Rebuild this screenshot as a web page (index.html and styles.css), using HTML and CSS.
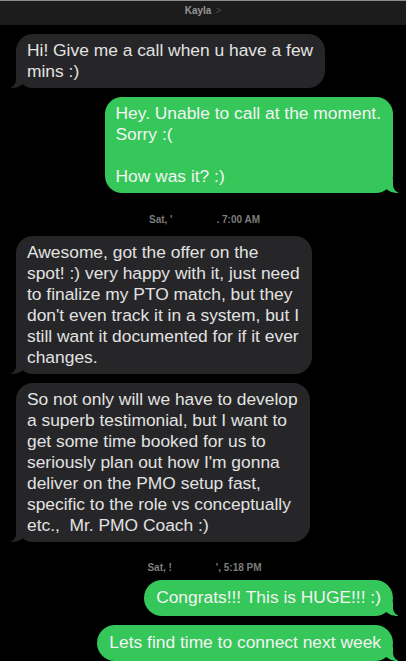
FILE: index.html
```html
<!DOCTYPE html>
<html>
<head>
<meta charset="utf-8">
<link rel="stylesheet" href="styles.css">
</head>
<body>
<header class="topbar">
  <span class="name">Kayla</span><span class="chev">&gt;</span>
</header>
<main class="thread">
  <div class="msg in">Hi! Give me a call when u have a few<br>mins :)</div>
  <div class="msg out">Hey. Unable to call at the moment.<br>Sorry :(<br><br>How was it? :)</div>
  <div class="stamp">Sat, '<span class="gap"></span>. 7:00 AM</div>
  <div class="msg in">Awesome, got the offer on the<br>spot! :) very happy with it, just need<br>to finalize my PTO match, but they<br>don't even track it in a system, but I<br>still want it documented for if it ever<br>changes.</div>
  <div class="msg in">So not only will we have to develop<br>a superb testimonial, but I want to<br>get some time booked for us to<br>seriously plan out how I'm gonna<br>deliver on the PMO setup fast,<br>specific to the role vs conceptually<br>etc.,&nbsp; Mr. PMO Coach :)</div>
  <div class="stamp tight">Sat, !<span class="gap"></span>', 5:18 PM</div>
  <div class="msg out single">Congrats!!! This is HUGE!!! :)</div>
  <div class="msg out single">Lets find time to connect next week</div>
</main>
</body>
</html>
```

FILE: styles.css
```css
html, body {
  margin: 0;
  padding: 0;
  background: #000;
}
body {
  width: 406px;
  height: 661px;
  overflow: hidden;
  font-family: "Liberation Sans", Arial, sans-serif;
}
.topbar {
  height: 25px;
  background: #1c1c1d;
  border-top: 1px solid #8c8c8c;
  box-sizing: border-box;
  display: flex;
  justify-content: center;
  align-items: flex-start;
  padding-top: 4px;
  font-size: 10px;
  font-weight: bold;
  color: #959595;
}
.chev {
  margin-left: 4px;
  font-weight: normal;
  color: #4a4a4a;
}
.thread {
  display: flex;
  flex-direction: column;
  padding: 9px 13px 0 16px;
}
.msg {
  position: relative;
  font-size: 17.4px;
  line-height: 21px;
  padding: 6px 12px 6px 11px;
  border-radius: 17px;
  white-space: nowrap;
  margin-bottom: 9px;
}
.msg.single {
  padding: 7px 12px 8px 12px;
  border-radius: 18px;
}
.msg.in {
  align-self: flex-start;
  background: #262628;
  color: #e2e2e2;
}
.msg.out {
  align-self: flex-end;
  background: #35c759;
  color: #f4f4f4;
}
.msg::before,
.msg::after {
  content: "";
  position: absolute;
  bottom: 0;
  height: 14px;
}
.msg.in::before {
  left: -5px;
  width: 14px;
  background: #262628;
  border-bottom-right-radius: 12px 10px;
}
.msg.in::after {
  left: -9px;
  width: 9px;
  background: #000;
  border-bottom-right-radius: 8px;
}
.msg.out::before {
  right: -5px;
  width: 14px;
  background: #35c759;
  border-bottom-left-radius: 12px 10px;
}
.msg.out::after {
  right: -9px;
  width: 9px;
  background: #000;
  border-bottom-left-radius: 8px;
}
.stamp {
  align-self: center;
  font-size: 10px;
  line-height: 14px;
  color: #7c7c7c;
  margin: 11px 0 9px;
  font-weight: bold;
}
.stamp.tight {
  margin: 10px 0 5px;
}
.gap {
  display: inline-block;
  width: 44px;
}
```
